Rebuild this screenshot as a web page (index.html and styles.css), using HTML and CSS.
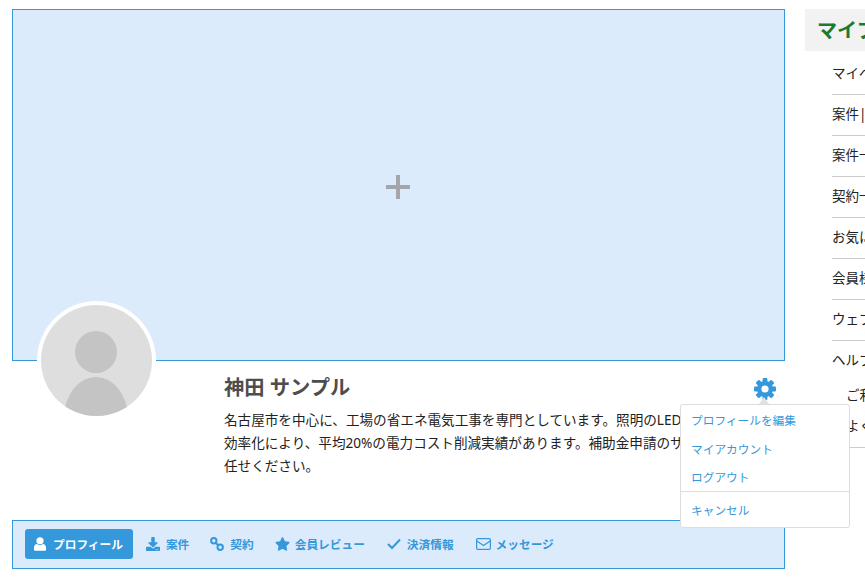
FILE: index.html
```html
<!DOCTYPE html>
<html lang="ja">
<head>
<meta charset="utf-8">
<title>プロフィール</title>
<link rel="stylesheet" href="styles.css">
</head>
<body>
<div class="page">
  <main class="main">
    <section class="cover"><span class="plus"></span></section>
    <div class="avatar">
      <svg viewBox="0 0 111 111" width="111" height="111">
        <circle cx="55.5" cy="55.5" r="55.5" fill="#dedede"/>
        <clipPath id="av"><circle cx="55.5" cy="55.5" r="55.5"/></clipPath>
        <circle cx="55" cy="47" r="21" fill="#c4c4c4"/>
        <ellipse cx="55" cy="113" rx="32" ry="41" fill="#c4c4c4" clip-path="url(#av)"/>
      </svg>
    </div>
    <section class="profile">
      <div class="info">
        <h1 class="name">神田 サンプル</h1>
        <p class="bio">名古屋市を中心に、工場の省エネ電気工事を専門としています。照明のLED化と空調の効率化により、平均20%の電力コスト削減実績があります。補助金申請のサポートもお任せください。</p>
      </div>
      <button class="gear" aria-label="設定">
        <svg viewBox="0 0 22 22" width="22" height="22">
          <g fill="#3498db">
            <rect x="8.600" y="0" width="4.800" height="22" rx="1"/>
            <rect x="8.600" y="0" width="4.800" height="22" rx="1" transform="rotate(45 11 11)"/>
            <rect x="8.600" y="0" width="4.800" height="22" rx="1" transform="rotate(90 11 11)"/>
            <rect x="8.600" y="0" width="4.800" height="22" rx="1" transform="rotate(135 11 11)"/>
            <circle cx="11" cy="11" r="8"/>
          </g>
          <circle cx="11" cy="11" r="3.600" fill="#fff"/>
        </svg>
      </button>
    </section>
    <nav class="tabs">
      <a class="tab active">
        <svg class="ic ic-user" viewBox="0 0 14 16" width="12" height="14"><circle cx="7" cy="4.200" r="4.200" fill="currentColor"/><path fill="currentColor" d="M1.500 16c-.9 0-1.500-.6-1.500-1.500v-2.400C0 9.800 1.600 8 3.600 8c1 .8 2.100 1.200 3.400 1.200s2.400-.4 3.400-1.200c2 0 3.600 1.800 3.600 4.100v2.400c0 .9-.6 1.500-1.500 1.500z"/></svg>
        プロフィール</a>
      <a class="tab">
        <svg class="ic" viewBox="0 0 512 512" width="14" height="14"><path fill="currentColor" d="M216 0h80c13.300 0 24 10.700 24 24v168h87.700c17.800 0 26.700 21.500 14.100 34.100L269.700 378.300c-7.500 7.500-19.800 7.500-27.300 0L90.100 226.100c-12.600-12.600-3.700-34.100 14.100-34.100H192V24c0-13.300 10.700-24 24-24zm296 376v112c0 13.300-10.700 24-24 24H24c-13.300 0-24-10.700-24-24V376c0-13.300 10.700-24 24-24h146.700l49 49c20.100 20.100 52.500 20.100 72.600 0l49-49H488c13.300 0 24 10.700 24 24zm-124 88c0-11-9-20-20-20s-20 9-20 20 9 20 20 20 20-9 20-20zm64 0c0-11-9-20-20-20s-20 9-20 20 9 20 20 20 20-9 20-20z"/></svg>
        案件</a>
      <a class="tab">
        <svg class="ic" viewBox="0 0 14 14" width="14" height="14"><g fill="none" stroke="currentColor" stroke-width="2"><circle cx="3.800" cy="3.800" r="2.700"/><circle cx="10.200" cy="10.200" r="2.700"/><path d="M5.700 5.700l2.600 2.600"/></g></svg>
        契約</a>
      <a class="tab tab-tight">
        <svg class="ic" viewBox="0 0 576 512" width="15" height="14"><path fill="currentColor" d="M259.300 17.800L194 150.200 47.900 171.500c-26.200 3.800-36.700 36.100-17.700 54.600l105.700 103-25 145.500c-4.500 26.300 23.200 46 46.400 33.700L288 439.600l130.700 68.700c23.200 12.200 50.900-7.400 46.400-33.700l-25-145.500 105.700-103c19-18.500 8.500-50.800-17.700-54.600L382 150.200 316.700 17.800c-11.700-23.600-45.600-23.900-57.400 0z"/></svg>
        会員レビュー</a>
      <a class="tab tab-check">
        <svg class="ic" viewBox="0 0 14 12" width="14" height="12"><path fill="none" stroke="currentColor" stroke-width="2" d="M1 6l4 4 8-8.500"/></svg>
        決済情報</a>
      <a class="tab tab-tight tab-mail">
        <svg class="ic" viewBox="0 0 15 12" width="15" height="12"><g fill="none" stroke="currentColor" stroke-width="1.200"><rect x=".6" y=".6" width="13.800" height="10.800" rx="1.200"/><path d="M.8 3l6.700 4.500L14.200 3"/></g></svg>
        メッセージ</a>
    </nav>
    <div class="menu">
      <ul class="menu-list">
        <li><a>プロフィールを編集</a></li>
        <li><a>マイアカウント</a></li>
        <li><a>ログアウト</a></li>
      </ul>
      <a class="menu-cancel">キャンセル</a>
    </div>
  </main>
  <aside class="side">
    <h2 class="side-title">マイプロフィール</h2>
    <ul class="side-list">
      <li>マイページトップ</li>
      <li>案件|募集中の案件</li>
      <li>案件一覧を見る</li>
      <li>契約一覧を見る</li>
      <li>お気に入り一覧</li>
      <li>会員様のレビュー</li>
      <li>ウェブサイトについて</li>
      <li class="has-sub">ヘルプ
        <ul class="sub">
          <li>ご利用ガイド</li>
          <li>よくある質問</li>
        </ul>
      </li>
    </ul>
  </aside>
</div>
</body>
</html>
```
FILE: styles.css
```css
* { box-sizing: border-box; }
html, body { margin: 0; padding: 0; height: 583px; overflow: hidden; background: #fff; }
body { font-family: "Noto Sans", "Noto Sans CJK JP", sans-serif; font-size: 13.5px; color: #222; }
ul { list-style: none; margin: 0; padding: 0; }

.page { display: flex; width: 865px; padding: 9px 0 0 12px; gap: 20px; overflow: hidden; }
.main { position: relative; flex: 0 0 773px; }

.cover { height: 352px; background: #dcebfb; border: 1px solid #3498db; display: flex; align-items: center; justify-content: center; }
.plus { position: relative; display: block; width: 24px; height: 24px; margin: 4px 1px 0 0; }
.plus::before, .plus::after { content: ""; position: absolute; background: #a3a5a8; }
.plus::before { left: 0; right: 0; top: 10px; height: 4px; }
.plus::after { top: 0; bottom: 0; left: 10px; width: 4px; }

.avatar { position: absolute; left: 25px; top: 292px; width: 119px; height: 119px; border-radius: 50%; background: #fff; padding: 4px; }
.avatar svg { display: block; }

.profile { display: flex; justify-content: space-between; align-items: flex-start; height: 159px; padding: 16px 9px 0 212px; }
.info { width: 530px; }
.name { margin: 0; font-size: 20.3px; line-height: 20px; font-weight: 700; color: #4d4d4d; }
.bio { margin: 11px 0 0; font-size: 13.6px; line-height: 23px; color: #222; }
.gear { border: 0; padding: 0; background: none; margin: 1px 0 0; line-height: 0; }

.tabs { display: flex; align-items: center; gap: 5px; height: 49px; padding: 0 12px 1px; background: #dcebfb; border: 1px solid #3498db; }
.tab { display: flex; align-items: center; gap: 6px; height: 30px; padding: 0 8px 2px; border-radius: 3px; font-size: 11.7px; font-weight: 700; color: #3498db; white-space: nowrap; }
.tab.active { background: #3498db; color: #fff; padding: 0 10px 2px 8px; gap: 7px; }
.tab-tight { gap: 5px; }
.tab-check { padding-left: 9px; }
.tab-mail { padding-left: 9px; }
.ic { flex: none; display: block; margin-top: 2px; }
.ic-user { margin-left: 1px; }

.menu { position: absolute; left: 668px; top: 395px; width: 170px; height: 124px; background: #fff; border: 1px solid #ddd; border-radius: 3px; font-size: 11.7px; color: #3498db; }
.menu::before { content: ""; position: absolute; left: 78px; top: -8px; border: 5px solid transparent; border-top: 0; border-bottom: 7px solid #e2e2e2; }
.menu-list { padding: 1px 0 0; border-bottom: 1px solid #ddd; height: 87px; }
.menu-list li { height: 28.5px; line-height: 28.5px; padding: 0 10px; }
.menu-cancel { display: block; padding: 0 10px; line-height: 37px; }

.side { flex: 0 0 240px; }
.side-title { margin: 0; height: 42px; line-height: 43px; padding: 0 12px; background: #f2f2f2; font-size: 20px; font-weight: 700; color: #1a7a2e; white-space: nowrap; }
.side-list { padding: 3px 0 0 27px; }
.side-list > li { height: 41px; line-height: 38px; border-bottom: 1px solid #ccc; font-size: 13.5px; color: #222; white-space: nowrap; }
.side-list > li.has-sub { height: auto; padding-bottom: 5px; }
.sub { padding-left: 14px; margin-top: 1px; }
.sub li { height: 31px; line-height: 31px; }
```
